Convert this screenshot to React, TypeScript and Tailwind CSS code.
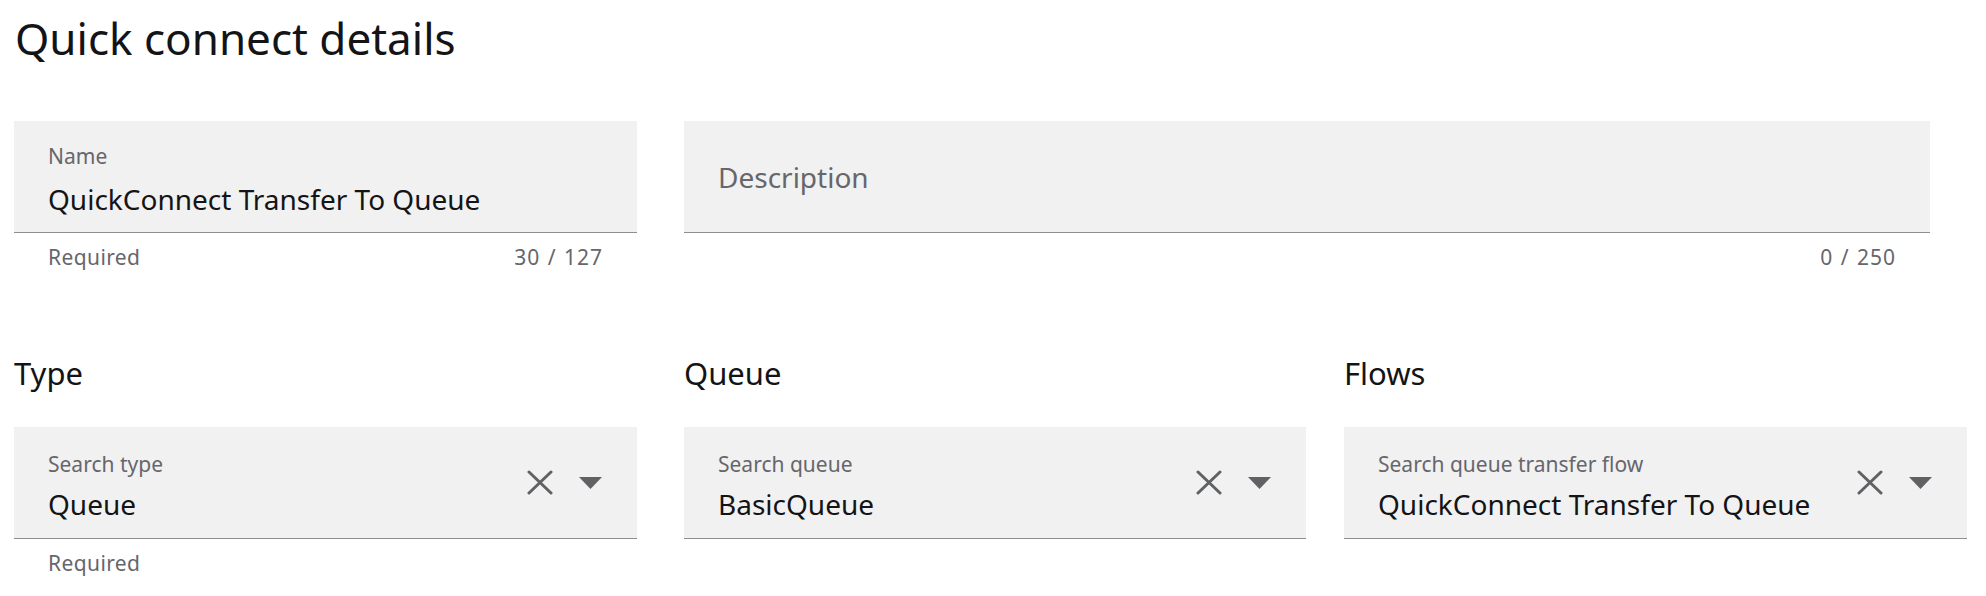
import React from "react";

const FONT = { fontFamily: '"Noto Sans", "Open Sans", sans-serif' };

const ClearIcon = () => (
  <svg width="26" height="25" viewBox="0 0 26 25" fill="none">
    <path d="M2 2L24 23M24 2L2 23" stroke="#5f6164" strokeWidth="3" strokeLinecap="round" />
  </svg>
);

const CaretIcon = () => (
  <svg width="23" height="12" viewBox="0 0 23 12">
    <path d="M0 0H23L11.5 12Z" fill="#5f6164" />
  </svg>
);

interface TextFieldProps {
  label?: string;
  value?: string;
  placeholder?: string;
  helper?: string;
  count: string;
  width: string;
}

const TextField: React.FC<TextFieldProps> = ({ label, value, placeholder, helper, count, width }) => (
  <div className={width}>
    <div className="h-[112px] bg-[#f1f1f1] border-b-[1.5px] border-[#8d8d92] px-[34px] flex flex-col justify-center">
      {label && <div className="text-[21px] leading-[28px] text-[#66666b] mt-[6px] mb-[11px]">{label}</div>}
      {value && <div className="text-[28px] leading-[36px] text-[#141416]">{value}</div>}
      {placeholder && <div className="text-[28px] leading-[36px] text-[#66666b]">{placeholder}</div>}
    </div>
    <div className="flex justify-between px-[34px] pt-[10px] text-[21px] leading-[28px] text-[#66666b] tracking-[0.4px]">
      <span>{helper}</span>
      <span className="tracking-[1px] [word-spacing:1px]">{count}</span>
    </div>
  </div>
);

interface SelectFieldProps {
  heading: string;
  label: string;
  value: string;
  helper?: string;
  width: string;
}

const SelectField: React.FC<SelectFieldProps> = ({ heading, label, value, helper, width }) => (
  <div className={width}>
    <div className="text-[31px] leading-[40px] text-[#141416] mb-[34px]">{heading}</div>
    <div className="h-[112px] bg-[#f1f1f1] border-b-[1.5px] border-[#8d8d92] pl-[34px] pr-[35px] flex items-center">
      <div className="flex-1 flex flex-col pt-[6px]">
        <div className="text-[21px] leading-[28px] text-[#66666b] mb-[8px]">{label}</div>
        <div className="text-[28px] leading-[36px] text-[#141416]">{value}</div>
      </div>
      <div className="flex items-center gap-[26px]">
        <ClearIcon />
        <CaretIcon />
      </div>
    </div>
    {helper && (
      <div className="px-[34px] pt-[10px] text-[21px] leading-[28px] text-[#66666b] tracking-[0.4px]">{helper}</div>
    )}
  </div>
);

export default function App() {
  return (
    <div className="w-[1986px] h-[596px] bg-white px-[14px] pt-[9px]" style={FONT}>
      <h1 className="text-[44px] leading-[58px] text-[#141416] pl-[1px]">Quick connect details</h1>

      <div className="flex gap-[47px] mt-[54px]">
        <TextField label="Name" value="QuickConnect Transfer To Queue" helper="Required" count="30 / 127" width="w-[623px]" />
        <TextField placeholder="Description" count="0 / 250" width="w-[1246px]" />
      </div>

      <div className="flex mt-[82px]">
        <SelectField heading="Type" label="Search type" value="Queue" helper="Required" width="w-[623px] mr-[47px]" />
        <SelectField heading="Queue" label="Search queue" value="BasicQueue" width="w-[622px] mr-[38px]" />
        <SelectField heading="Flows" label="Search queue transfer flow" value="QuickConnect Transfer To Queue" width="w-[623px]" />
      </div>
    </div>
  );
}
